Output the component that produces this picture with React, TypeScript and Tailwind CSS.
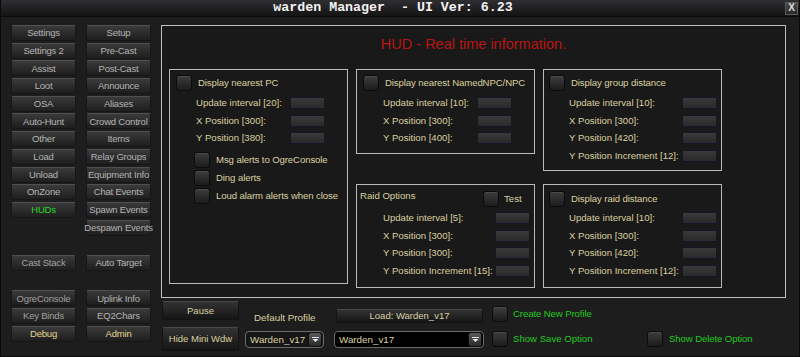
import React from "react";

const LABEL = "text-[#d9d1a0]";

const NavButton: React.FC<{ label: string; tone?: string }> = ({
  label,
  tone = "text-[#b4b4b4]",
}) => (
  <div
    className={`flex h-[16px] w-[65px] items-center justify-center whitespace-nowrap rounded-[2px] border border-[#161616] border-t-[#505050] bg-gradient-to-b from-[#3a3a3a] to-[#1e1e1e] text-[9.5px] leading-none tracking-[-0.2px] ${tone}`}
  >
    {label}
  </div>
);

const Check: React.FC = () => (
  <div className="h-[16px] w-[16px] shrink-0 rounded-[3px] border border-[#0b0b0b] bg-gradient-to-b from-[#3d3d3d] to-[#1c1c1c] shadow-[inset_0_1px_0_#4c4c4c]" />
);

const Field: React.FC = () => (
  <div className="h-[12px] w-[35px] shrink-0 border border-[#151528] bg-gradient-to-b from-[#393939] to-[#2a2a2a]" />
);

const FieldRow: React.FC<{ label: string; labelWidth: string }> = ({ label, labelWidth }) => (
  <div className="flex h-[12px] items-center">
    <span className={`${labelWidth} whitespace-nowrap text-[9.6px] leading-none ${LABEL}`}>{label}</span>
    <Field />
  </div>
);

const CheckLine: React.FC<{ label: string; tone?: string; gap?: string }> = ({
  label,
  tone = LABEL,
  gap = "ml-[6px]",
}) => (
  <div className="flex h-[16px] items-center">
    <Check />
    <span className={`${gap} whitespace-nowrap text-[9.6px] leading-none tracking-[-0.1px] ${tone}`}>{label}</span>
  </div>
);

const DropArrow: React.FC = () => (
  <div className="flex h-[15px] w-[14px] shrink-0 items-center justify-center rounded-[3px] border border-[#0e0e0e] bg-gradient-to-b from-[#5a5a5a] to-[#2b2b2b]">
    <svg width="7" height="5" viewBox="0 0 7 5">
      <rect x="0" y="0" width="7" height="1" fill="#e8e8e8" />
      <polygon points="0.5,2 6.5,2 3.5,5" fill="#e8e8e8" />
    </svg>
  </div>
);

const Dropdown: React.FC<{ width: string; bg: string }> = ({ width, bg }) => (
  <div
    className={`flex h-[17px] ${width} items-center rounded-[4px] border border-[#6b6b6b] ${bg} pl-[4px] pr-[1px]`}
  >
    <span className={`flex-1 text-[9.8px] leading-none ${LABEL}`}>Warden_v17</span>
    <DropArrow />
  </div>
);

const navRows: [string | null, string | null][] = [
  ["Settings", "Setup"],
  ["Settings 2", "Pre-Cast"],
  ["Assist", "Post-Cast"],
  ["Loot", "Announce"],
  ["OSA", "Aliases"],
  ["Auto-Hunt", "Crowd Control"],
  ["Other", "Items"],
  ["Load", "Relay Groups"],
  ["Unload", "Equipment Info"],
  ["OnZone", "Chat Events"],
  ["HUDs", "Spawn Events"],
  [null, "Despawn Events"],
  [null, null],
  ["Cast Stack", "Auto Target"],
  [null, null],
  ["OgreConsole", "Uplink Info"],
  ["Key Binds", "EQ2Chars"],
  ["Debug", "Admin"],
];

const toneFor = (label: string) => {
  if (label === "HUDs") return "text-[#28d828]";
  if (label === "Debug" || label === "Admin") return "text-[#e2d78e]";
  if (label === "Cast Stack" || label === "OgreConsole" || label === "Key Binds")
    return "text-[#a0a0a0]";
  return "text-[#b4b4b4]";
};

const LeftNav: React.FC = () => (
  <div className="flex w-[140px] flex-col gap-[1.7px]">
    {navRows.map(([a, b], i) => (
      <div key={i} className="flex h-[16px] gap-[10px]">
        {a ? <NavButton label={a} tone={toneFor(a)} /> : <div className="w-[65px]" />}
        {b ? <NavButton label={b} tone={toneFor(b)} /> : <div className="w-[65px]" />}
      </div>
    ))}
  </div>
);

const BOX = "flex w-[179px] flex-col border border-[#bababa]";

const HudPanel: React.FC = () => (
  <div className="flex h-[273px] w-[625px] flex-col border border-[#c0c0c0] bg-[#191919]">
    <div className="mt-[8px] h-[20px] text-center text-[14.5px] leading-[20px] text-[#b81414]">
      HUD - Real time information.
    </div>

    <div className="mt-[15px] flex gap-[8px] pl-[7px]">
      {/* nearest PC */}
      <div className={`${BOX} h-[215px] pl-[6px] pt-[5px]`}>
        <CheckLine label="Display nearest PC" />
        <div className="ml-[20px] mt-[6px] flex flex-col gap-[5.5px]">
          <FieldRow label="Update interval [20]:" labelWidth="w-[94px]" />
          <FieldRow label="X Position [300]:" labelWidth="w-[94px]" />
          <FieldRow label="Y Position [380]:" labelWidth="w-[94px]" />
        </div>
        <div className="ml-[18px] mt-[8px] flex flex-col gap-[2px]">
          <CheckLine label="Msg alerts to OgreConsole" />
          <CheckLine label="Ding alerts" />
          <CheckLine label="Loud alarm alerts when close" />
        </div>
      </div>

      {/* NPC + raid options */}
      <div className="flex flex-col gap-[30px]">
        <div className={`${BOX} h-[85px] pl-[6px] pt-[5px]`}>
          <CheckLine label="Display nearest NamedNPC/NPC" />
          <div className="ml-[20px] mt-[6px] flex flex-col gap-[5.5px]">
            <FieldRow label="Update interval [10]:" labelWidth="w-[94px]" />
            <FieldRow label="X Position [300]:" labelWidth="w-[94px]" />
            <FieldRow label="Y Position [400]:" labelWidth="w-[94px]" />
          </div>
        </div>
        <div className={`${BOX} h-[104px] pl-[3px] pt-[6px]`}>
          <div className="flex h-[16px] items-start">
            <span className={`w-[123px] text-[9.6px] leading-[10px] ${LABEL}`}>Raid Options</span>
            <div className="flex items-center">
              <Check />
              <span className={`ml-[5px] text-[9.6px] leading-none ${LABEL}`}>Test</span>
            </div>
          </div>
          <div className="ml-[23px] mt-[5px] flex flex-col gap-[5.5px]">
            <FieldRow label="Update interval [5]:" labelWidth="w-[112px]" />
            <FieldRow label="X Position [300]:" labelWidth="w-[112px]" />
            <FieldRow label="Y Position [300]:" labelWidth="w-[112px]" />
            <FieldRow label="Y Position Increment [15]:" labelWidth="w-[112px]" />
          </div>
        </div>
      </div>

      {/* group + raid distance */}
      <div className="flex flex-col gap-[13px]">
        <div className={`${BOX} h-[102px] pl-[5px] pt-[5px]`}>
          <CheckLine label="Display group distance" />
          <div className="ml-[20px] mt-[6px] flex flex-col gap-[5.5px]">
            <FieldRow label="Update interval [10]:" labelWidth="w-[113px]" />
            <FieldRow label="X Position [300]:" labelWidth="w-[113px]" />
            <FieldRow label="Y Position [420]:" labelWidth="w-[113px]" />
            <FieldRow label="Y Position Increment [12]:" labelWidth="w-[113px]" />
          </div>
        </div>
        <div className={`${BOX} h-[104px] pl-[5px] pt-[6px]`}>
          <CheckLine label="Display raid distance" />
          <div className="ml-[20px] mt-[5px] flex flex-col gap-[5.5px]">
            <FieldRow label="Update interval [10]:" labelWidth="w-[113px]" />
            <FieldRow label="X Position [300]:" labelWidth="w-[113px]" />
            <FieldRow label="Y Position [420]:" labelWidth="w-[113px]" />
            <FieldRow label="Y Position Increment [12]:" labelWidth="w-[113px]" />
          </div>
        </div>
      </div>
    </div>
  </div>
);

const ActionButton: React.FC<{ label: string; className: string }> = ({ label, className }) => (
  <div
    className={`flex items-center justify-center whitespace-nowrap rounded-[2px] border border-[#121212] border-t-[#484848] bg-gradient-to-b from-[#323232] to-[#161616] text-[9.5px] leading-none ${LABEL} ${className}`}
  >
    {label}
  </div>
);

const BottomBar: React.FC = () => (
  <div className="flex">
    <div className="ml-[1px] flex w-[77px] flex-col">
      <ActionButton label="Pause" className="mt-[3px] h-[19px]" />
      <ActionButton label="Hide Mini Wdw" className="mt-[7px] h-[24px]" />
    </div>
    <div className="ml-[6px] flex w-[79px] flex-col">
      <div className={`ml-[9px] mt-[13px] h-[14px] whitespace-nowrap text-[9.8px] leading-[14px] ${LABEL}`}>
        Default Profile
      </div>
      <div className="mt-[6px]">
        <Dropdown width="w-[79px]" bg="bg-[#161616]" />
      </div>
    </div>
    <div className="ml-[10px] flex w-[150px] flex-col">
      <ActionButton label="Load: Warden_v17" className="ml-[2px] mr-[1px] mt-[11px] h-[14px]" />
      <div className="mt-[8px]">
        <Dropdown width="w-[150px]" bg="bg-black" />
      </div>
    </div>
    <div className="ml-[8px] flex flex-col">
      <div className="mt-[8px]">
        <CheckLine label="Create New Profile" tone="text-[#22c922]" gap="ml-[5px]" />
      </div>
      <div className="mt-[9px] flex items-center">
        <Check />
        <span className="ml-[5px] w-[134px] whitespace-nowrap text-[9.6px] leading-none text-[#22c922]">
          Show Save Option
        </span>
        <CheckLine label="Show Delete Option" tone="text-[#22c922]" />
      </div>
    </div>
  </div>
);

const App: React.FC = () => (
  <div className="flex h-[357px] w-[800px] flex-col border-x border-b border-[#0a0a0a] bg-[#1d1d1d] font-['Liberation_Sans',Arial,sans-serif]">
    <div className="flex h-[17px] shrink-0 items-center border-b border-[#080808] bg-gradient-to-b from-[#2f2f33] to-[#141414]">
      <div className="flex-1 whitespace-pre text-center font-['Liberation_Mono',monospace] text-[13.3px] font-bold leading-none text-[#f2f2f2]">
        warden Manager  - UI Ver: 6.23
      </div>
      <div className="mr-[1px] flex h-[13px] w-[13px] items-center justify-center border border-[#5a5a5a] bg-gradient-to-b from-[#4a4a4a] to-[#2a2a2a] text-[10px] font-bold leading-none text-[#dddddd]">
        X
      </div>
    </div>
    <div className="flex flex-1 pl-[10px] pt-[8px]">
      <LeftNav />
      <div className="ml-[10px] flex flex-col">
        <HudPanel />
        <BottomBar />
      </div>
    </div>
  </div>
);

export default App;
